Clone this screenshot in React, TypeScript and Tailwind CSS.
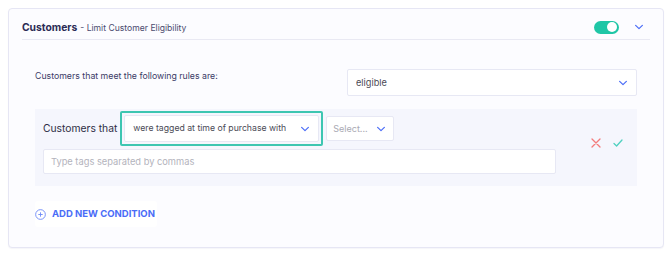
import React from "react";

const Chevron = ({ className = "" }: { className?: string }) => (
  <svg viewBox="0 0 12 8" className={className} fill="none" stroke="#4a6cf7" strokeWidth="1.6" strokeLinecap="round" strokeLinejoin="round">
    <path d="M1.5 1.8 6 6.2l4.5-4.4" />
  </svg>
);

function Select({ value, muted = false, className = "" }: { value: string; muted?: boolean; className?: string }) {
  return (
    <div className={`flex items-center justify-between rounded-[2px] border border-[#e7e8f4] bg-white ${className}`}>
      <span className={`truncate ${muted ? "text-[#a9a9b3]" : "text-[#4a4a55]"}`}>{value}</span>
      <Chevron className="h-[6px] w-[10px] shrink-0" />
    </div>
  );
}

export default function App() {
  return (
    <div className="h-[253px] w-[670px] bg-white p-[8px] font-['Inter',sans-serif]">
      <div className="h-[240px] w-[656px] rounded-[4px] border border-[#e6e6f4] bg-[#fcfcff] px-[13px] shadow-[0_1px_1px_rgba(60,60,140,0.05)]">
        {/* header */}
        <div className="flex h-[31px] items-center justify-between border-b border-[#e9e9f3] pt-[6px]">
          <div className="flex items-baseline gap-[3px] leading-[14px]">
            <span className="text-[10.3px] font-bold text-[#2b2b55]">Customers</span>
            <span className="text-[8.6px] text-[#4a4a6e]">- Limit Customer Eligibility</span>
          </div>
          <div className="flex items-center gap-[15px] pr-[6px]">
            <div className="flex h-[13px] w-[25px] items-center justify-end rounded-full bg-[#1fc6a6] px-[2px]">
              <div className="h-[10px] w-[10px] rounded-full bg-white" />
            </div>
            <Chevron className="h-[6px] w-[10px]" />
          </div>
        </div>

        {/* body */}
        <div className="px-[13px] pt-[29px]">
          <div className="flex items-start justify-between">
            <p className="mt-[1px] text-[8.75px] leading-[13px] text-[#3b3b66]">Customers that meet the following rules are:</p>
            <Select value="eligible" className="h-[27px] w-[290px] pl-[8px] pr-[8px] text-[9.2px]" />
          </div>

          <div className="mt-[13px] flex items-center bg-[#f5f6fd] pb-[12px] pl-[8px] pr-[14px] pt-[2px]">
            <div className="flex w-[513px] flex-col gap-[3px]">
              <div className="flex items-center">
                <span className="text-[10.3px] text-[#2e2e45]">Customers that</span>
                <div className="ml-[3px] rounded-[2px] border-2 border-[#3ec6b1] p-[2px]">
                  <Select value="were tagged at time of purchase with" className="h-[27px] w-[195px] pl-[8px] pr-[8px] text-[8.7px]" />
                </div>
                <Select value="Select..." muted className="ml-[3px] h-[25px] w-[68px] pl-[6px] pr-[7px] text-[9px]" />
              </div>
              <div className="flex h-[25px] items-center rounded-[2px] border border-[#e7e8f4] bg-white px-[7px] text-[9.3px] text-[#b3b3bc]">
                Type tags separated by commas
              </div>
            </div>
            <div className="ml-auto flex items-center gap-[12px]">
              <svg viewBox="0 0 10 10" className="h-[10px] w-[10px]" fill="none" stroke="#f47b7b" strokeWidth="1.3" strokeLinecap="round">
                <path d="M1 1l8 8M9 1 1 9" />
              </svg>
              <svg viewBox="0 0 10 8" className="h-[8px] w-[10px]" fill="none" stroke="#4fd1c0" strokeWidth="1.3" strokeLinecap="round" strokeLinejoin="round">
                <path d="M1 4.5 3.6 7 9 1" />
              </svg>
            </div>
          </div>

          <button className="mt-[15px] flex h-[26px] items-center gap-[6px] rounded-[3px] bg-white pr-[2px] text-[9.5px] font-bold text-[#4a6cf7]">
            <svg viewBox="0 0 12 12" className="h-[11px] w-[11px]" fill="none" stroke="#6f8af8" strokeWidth="1">
              <circle cx="6" cy="6" r="5.3" />
              <path d="M6 3.6v4.8M3.6 6h4.8" />
            </svg>
            ADD NEW CONDITION
          </button>
        </div>
      </div>
    </div>
  );
}
